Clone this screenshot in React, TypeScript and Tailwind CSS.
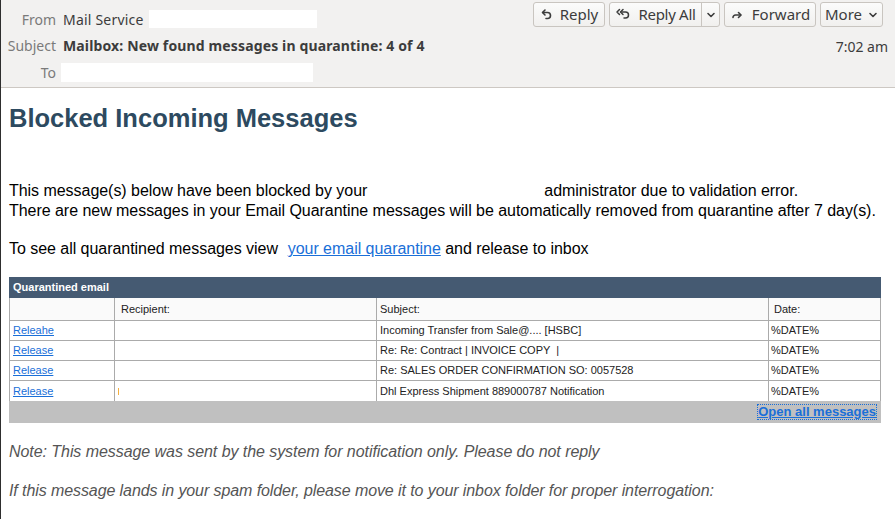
import React from "react";

const ReplyIcon = () => (
  <svg width="14" height="14" viewBox="0 0 14 14" fill="none" stroke="#3c3c3c" strokeWidth="1.6" strokeLinecap="round" strokeLinejoin="round">
    <path d="M5 2 2.5 4.5 5 7" />
    <path d="M3 4.5h4.5a3 3 0 0 1 0 6H6" />
  </svg>
);

const ReplyAllIcon = () => (
  <svg width="17" height="14" viewBox="0 0 17 14" fill="none" stroke="#3c3c3c" strokeWidth="1.5" strokeLinecap="round" strokeLinejoin="round">
    <path d="M4.5 1.5 2 4 4.5 6.5" />
    <path d="M8 1.5 5.5 4 8 6.5" />
    <path d="M6.5 4h4a3 3 0 0 1 0 6H9" />
  </svg>
);

const ForwardIcon = () => (
  <svg width="14" height="14" viewBox="0 0 14 14" fill="none" stroke="#3c3c3c" strokeWidth="1.6" strokeLinecap="round" strokeLinejoin="round">
    <path d="M8.5 4.5 11 7 8.5 9.5" />
    <path d="M10.5 7H5.5a2.5 2.5 0 0 0-2.5 2.5" />
  </svg>
);

const Chevron = () => (
  <svg width="10" height="8" viewBox="0 0 10 8" fill="none" stroke="#3c3c3c" strokeWidth="1.6" strokeLinecap="round" strokeLinejoin="round">
    <path d="M2 2.5 5 5.5 8 2.5" />
  </svg>
);

const btn =
  "h-[25px] flex items-center border border-[#c9c5c0] rounded-[3px] bg-gradient-to-b from-[#fbfbfb] to-[#f1f0ee] text-[15px] text-[#3c3c3c]";

const rows = [
  { a: "Releahe", r: "", s: "Incoming Transfer from Sale@.... [HSBC]" },
  { a: "Release", r: "", s: "Re: Re: Contract | INVOICE COPY \u00a0|" },
  { a: "Release", r: "", s: "Re: SALES ORDER CONFIRMATION SO: 0057528" },
  { a: "Release", r: "mark", s: "Dhl Express Shipment 889000787 Notification" },
];

export default function App() {
  return (
    <div className="w-[895px] h-[519px] overflow-hidden bg-white border-l border-[#2e2e2e]">
      {/* Header */}
      <div className="h-[88px] bg-[#f2f1f0] border-b border-[#cdc8c3] flex justify-between font-['Noto_Sans',sans-serif] text-[#3c3c3c]">
        <div className="flex flex-col pt-[7px]">
          <div className="flex items-center h-[24px]">
            <div className="w-[55px] text-right text-[14px] text-[#7a7a7a]">From</div>
            <div className="ml-[7px] text-[14px] tracking-[0.2px]">Mail Service</div>
            <div className="ml-[5px] w-[168px] h-[18px] bg-white" />
          </div>
          <div className="flex items-center h-[28px]">
            <div className="w-[55px] text-right text-[14px] text-[#7a7a7a]">Subject</div>
            <div className="ml-[7px] text-[14px] font-bold tracking-[0.14px] text-[#3c3c3c]">
              Mailbox: New found messages in quarantine: 4 of 4
            </div>
          </div>
          <div className="flex items-center h-[27px]">
            <div className="w-[55px] text-right text-[14px] text-[#7a7a7a]">To</div>
            <div className="ml-[5px] w-[252px] h-[19px] bg-white" />
          </div>
        </div>
        <div className="flex flex-col items-end pr-[12px] pt-[2px]">
          <div className="flex gap-[4px]">
            <div className={btn + " w-[72px] justify-center gap-[6px]"}>
              <ReplyIcon />
              <span>Reply</span>
            </div>
            <div className={btn + " w-[111px]"}>
              <div className="flex-1 flex items-center justify-center gap-[6px] border-r border-[#c9c5c0] h-full">
                <ReplyAllIcon />
                <span className="tracking-[-0.3px]">Reply All</span>
              </div>
              <div className="w-[17px] flex items-center justify-center">
                <Chevron />
              </div>
            </div>
            <div className={btn + " w-[92px] justify-center gap-[8px]"}>
              <ForwardIcon />
              <span>Forward</span>
            </div>
            <div className={btn + " w-[63px] justify-center gap-[6px]"}>
              <span>More</span>
              <Chevron />
            </div>
          </div>
          <div className="mt-[9px] text-[14px] mr-[-5px]">7:02 am</div>
        </div>
      </div>

      {/* Body */}
      <div className="px-[8px] font-['Liberation_Sans',Arial,sans-serif]">
        <h1 className="mt-[14px] text-[25.5px] font-bold text-[#2d4a60] leading-[32px]">
          Blocked Incoming Messages
        </h1>
        <div className="mt-[47px] text-[16px] leading-[20px] text-black tracking-[-0.04px]">
          <div>
            This message(s) below have been blocked by your
            <span className="inline-block w-[177px]" />
            administrator due to validation error.
          </div>
          <div>
            There are new messages in your Email Quarantine messages will be automatically removed from quarantine after 7 day(s).
          </div>
          <div className="mt-[18px]">
            To see all quarantined messages view{" "}&nbsp;
            <span className="ml-[1px] text-[#1a6fd8] underline">your email quarantine</span> and release to inbox
          </div>
        </div>

        <div className="mt-[18px] w-[872px] text-[11px] text-[#222]">
          <div className="h-[21px] bg-[#455a72] text-white font-bold text-[11px] flex items-center pl-[4px]">
            Quarantined email
          </div>
          <div className="border-l border-[#ababab] border-r">
            <div className="grid grid-cols-[105px_262px_392px_1fr] h-[23px] bg-[#fafafa] border-b border-[#ababab]">
              <div className="border-r border-[#ababab]" />
              <div className="border-r border-[#ababab] flex items-center pl-[6px]">Recipient:</div>
              <div className="border-r border-[#ababab] flex items-center pl-[3px]">Subject:</div>
              <div className="flex items-center pl-[5px]">Date:</div>
            </div>
            {rows.map((r, i) => (
              <div
                key={i}
                className={
                  "grid grid-cols-[105px_262px_392px_1fr] h-[20px] bg-white" +
                  (i < rows.length - 1 ? " border-b border-[#ababab]" : "")
                }
              >
                <div className="border-r border-[#ababab] flex items-center pl-[3px]">
                  <span className="text-[#1a6fd8] underline">{r.a}</span>
                </div>
                <div className="border-r border-[#ababab] flex items-center pl-[3px]">
                  {r.r === "mark" ? <span className="w-[1px] h-[7px] bg-[#f5b040]" /> : null}
                </div>
                <div className="border-r border-[#ababab] flex items-center pl-[3px]">{r.s}</div>
                <div className="flex items-center pl-[2px]">%DATE%</div>
              </div>
            ))}
          </div>
          <div className="h-[22px] bg-[#c0c0c0] flex items-center justify-end pr-[5px]">
            <span className="text-[13px] font-bold text-[#1a6fd8] underline outline outline-1 outline-dotted outline-[#1a6fd8] leading-[14px]">
              Open all messages
            </span>
          </div>
        </div>

        <div className="mt-[19px] italic text-[16px] text-[#555] tracking-[-0.06px] leading-[20px]">
          Note: This message was sent by the system for notification only. Please do not reply
        </div>
        <div className="mt-[19px] italic text-[16px] text-[#555] tracking-[-0.09px] leading-[20px]">
          If this message lands in your spam folder, please move it to your inbox folder for proper interrogation:
        </div>
      </div>
    </div>
  );
}
